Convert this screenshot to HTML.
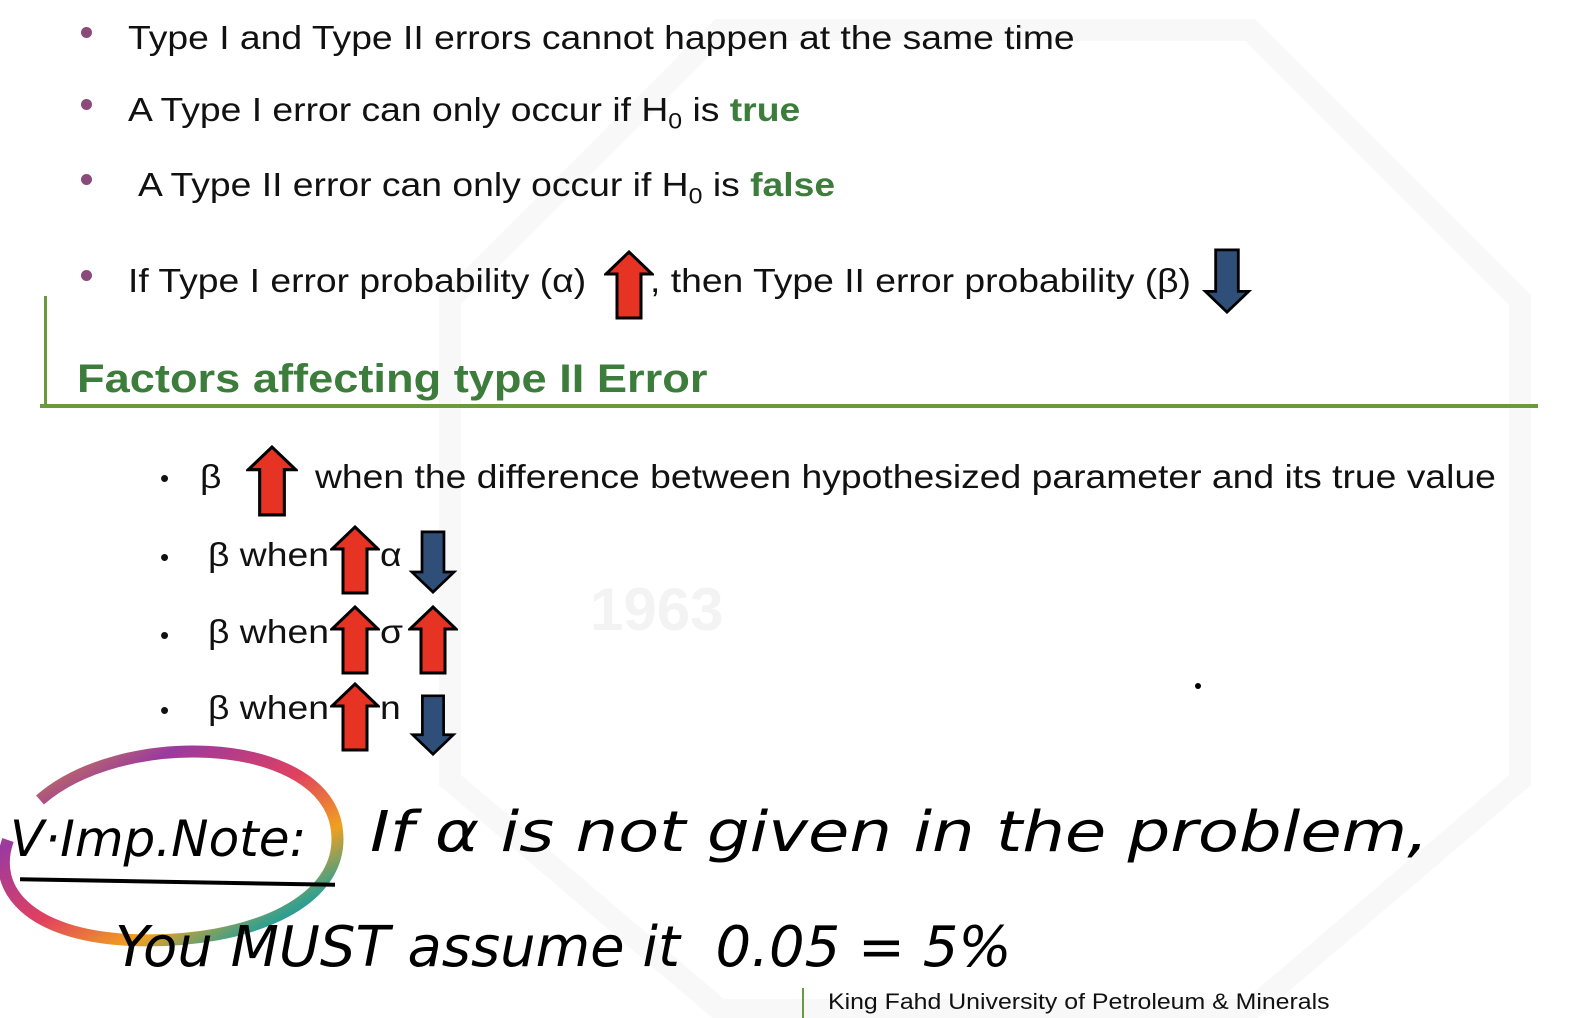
<!DOCTYPE html>
<html><head><meta charset="utf-8"><style>
body{margin:0;width:1580px;height:1018px;background:#fff;position:relative;overflow:hidden;font-family:"Liberation Sans",sans-serif;color:#111}
.t{position:absolute;font-size:33px;white-space:nowrap;transform:scaleX(1.13);transform-origin:0 0;margin-top:3px}
.d{position:absolute;width:11px;height:11px;border-radius:50%;background:#8a4a7a}
.g{color:#3c7d3c;font-weight:bold}
.b{position:absolute;font-size:26px;margin-top:3px}
.h{position:absolute;font-family:"DejaVu Sans",sans-serif;font-style:italic;font-size:56px;white-space:nowrap;color:#000;transform-origin:0 0}
svg.a{position:absolute}
</style></head><body>
<svg width="1580" height="1018" style="position:absolute;left:0;top:0">
<polygon points="720,30 1250,30 1520,300 1520,780 1250,1010 720,1010 450,780 450,300" fill="none" stroke="#f8f8f8" stroke-width="22"/>
<text x="590" y="630" font-size="60" font-family="Liberation Sans" font-weight="bold" fill="#f3f3f3">1963</text>
</svg>
<div class="d" style="left:81px;top:27px"></div><div class="t" style="left:128px;top:16px">Type I and Type II errors cannot happen at the same time</div>
<div class="d" style="left:81px;top:99px"></div><div class="t" style="left:128px;top:88px">A Type I error can only occur if H<sub style="font-size:22px">0</sub> is <span class="g">true</span></div>
<div class="d" style="left:81px;top:174px"></div><div class="t" style="left:138px;top:163px">A Type II error can only occur if H<sub style="font-size:22px">0</sub> is <span class="g">false</span></div>
<div class="d" style="left:81px;top:270px"></div><div class="t" style="left:128px;top:259px">If Type I error probability (α)</div>
<div class="t" style="left:650px;top:259px">, then Type II error probability (β)</div>
<div style="position:absolute;left:44px;top:296px;width:3px;height:112px;background:#6a9a3c"></div>
<div style="position:absolute;left:40px;top:404px;width:1498px;height:4px;background:#6a9a3c"></div>
<div class="t g" style="left:77px;top:354px;font-size:40px">Factors affecting type II Error</div>
<div class="b" style="left:160px;top:460px">•</div><div class="t" style="left:200px;top:455px">β</div><div class="t" style="left:315px;top:455px">when the difference between hypothesized parameter and its true value</div>
<div class="b" style="left:160px;top:539px">•</div><div class="t" style="left:208px;top:533px">β when</div><div class="t" style="left:380px;top:533px">α</div>
<div class="b" style="left:160px;top:617px">•</div><div class="t" style="left:208px;top:610px">β when</div><div class="t" style="left:380px;top:610px">σ</div>
<div class="b" style="left:160px;top:692px">•</div><div class="t" style="left:208px;top:686px">β when</div><div class="t" style="left:380px;top:686px">n</div>
<svg width="0" height="0"><defs>
<symbol id="up" viewBox="0 0 50 70"><polygon points="25,2 48,24 37,24 37,68 13,68 13,24 2,24" fill="#e63323" stroke="#000" stroke-width="3"/></symbol>
<symbol id="dn" viewBox="0 0 50 70"><polygon points="25,68 48,46 37,46 37,2 13,2 13,46 2,46" fill="#2f4f78" stroke="#000" stroke-width="3"/></symbol>
</defs></svg>
<svg class="a" style="left:604px;top:250px" width="50" height="70"><use href="#up"/></svg>
<svg class="a" style="left:1202px;top:248px" width="50" height="66"><use href="#dn"/></svg>
<svg class="a" style="left:246px;top:445px" width="52" height="72"><use href="#up"/></svg>
<svg class="a" style="left:330px;top:525px" width="50" height="70"><use href="#up"/></svg>
<svg class="a" style="left:408px;top:530px" width="50" height="64"><use href="#dn"/></svg>
<svg class="a" style="left:330px;top:605px" width="50" height="70"><use href="#up"/></svg>
<svg class="a" style="left:408px;top:605px" width="50" height="70"><use href="#up"/></svg>
<svg class="a" style="left:330px;top:682px" width="50" height="70"><use href="#up"/></svg>
<svg class="a" style="left:408px;top:694px" width="50" height="62"><use href="#dn"/></svg>
<div style="position:absolute;left:1195px;top:683px;width:6px;height:6px;border-radius:50%;background:#000"></div>
<svg class="a" style="left:0;top:740px" width="360" height="220">
<defs><linearGradient id="rb" x1="0" x2="1" y1="0" y2="1"><stop offset="0" stop-color="#e0a020"/><stop offset=".25" stop-color="#9a3aa0"/><stop offset=".5" stop-color="#e04060"/><stop offset=".7" stop-color="#f0a020"/><stop offset=".85" stop-color="#30a090"/><stop offset="1" stop-color="#3060c0"/></linearGradient></defs>
<path d="M40,60 C120,-10 310,-5 335,80 C355,160 250,205 130,200 C30,195 -10,150 8,100" fill="none" stroke="url(#rb)" stroke-width="12"/>
</svg>
<div class="h" style="left:10px;top:810px;font-size:50px">V·Imp.Note:</div>
<div style="position:absolute;left:20px;top:880px;width:315px;height:4px;background:#000;transform:rotate(1deg)"></div>
<div class="h" style="left:370px;top:800px;transform:scaleX(1.2)">If α is not given in the problem,</div>
<div class="h" style="left:115px;top:915px">You MUST assume it&nbsp;&nbsp;0.05 = 5%</div>
<div style="position:absolute;left:802px;top:988px;width:2px;height:30px;background:#6a9a3c"></div>
<div class="t" style="left:828px;top:986px;font-size:22px">King Fahd University of Petroleum &amp; Minerals</div>
</body></html>
